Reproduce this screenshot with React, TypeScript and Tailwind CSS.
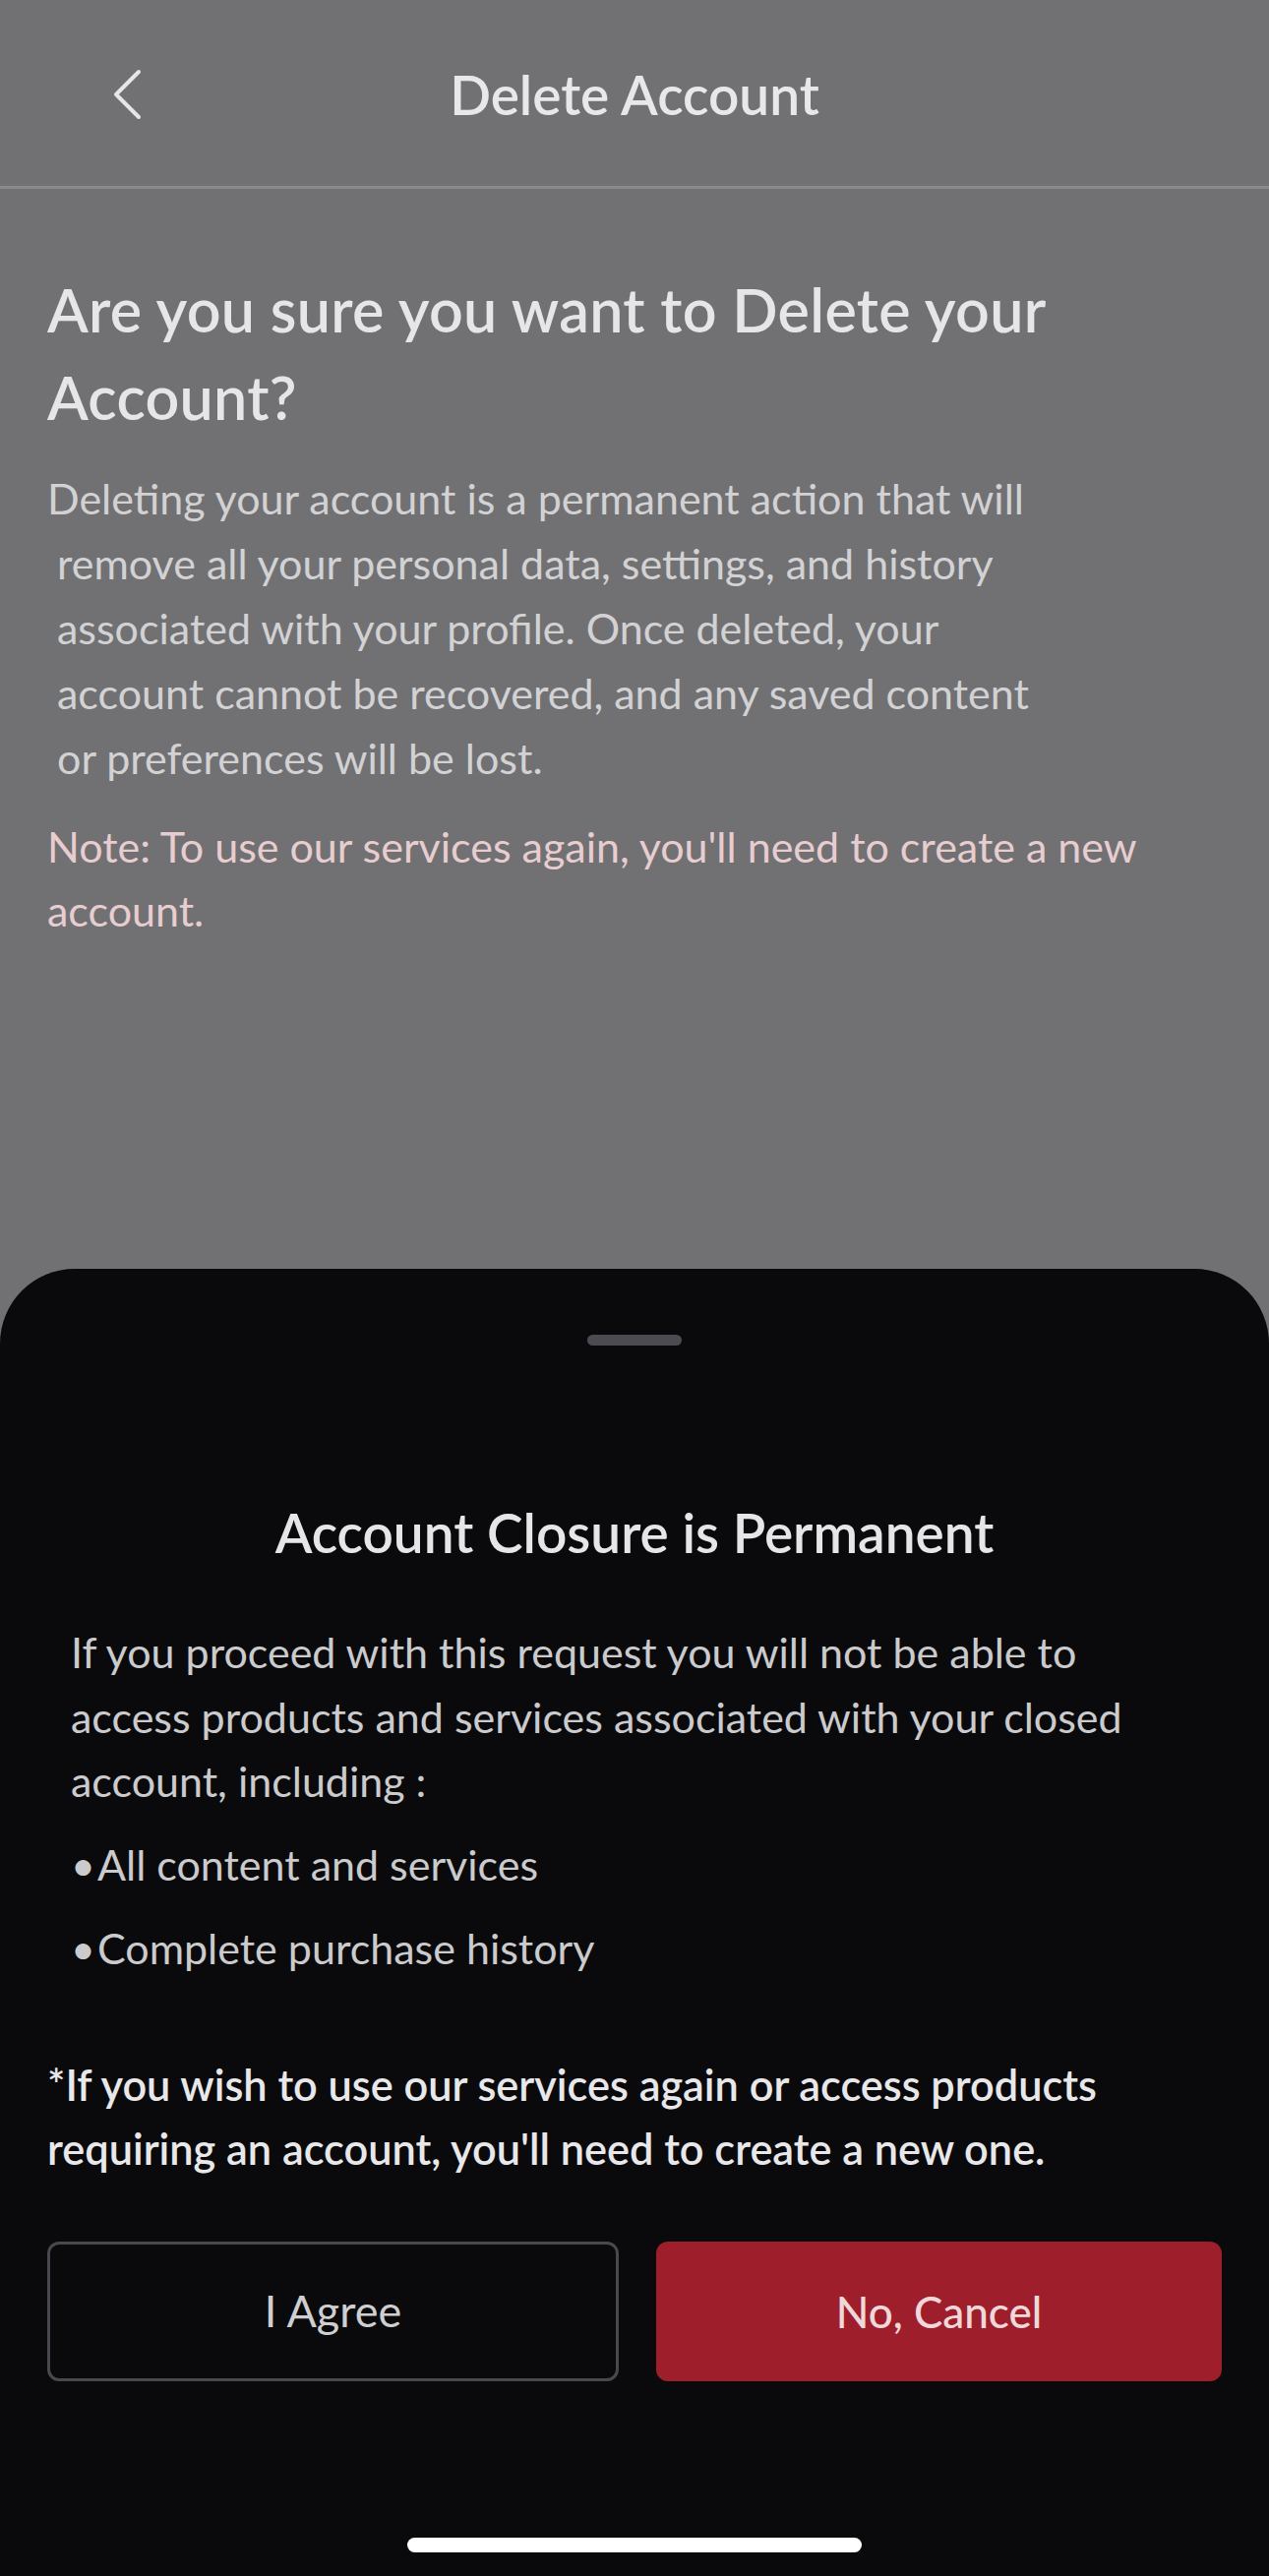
export default function App() {
  return (
    <div className="flex flex-col w-[1290px] h-[2619px] bg-[#717173] overflow-hidden font-['Lato',sans-serif]">
      {/* Header */}
      <div className="relative flex items-center justify-center h-[192px] border-b-[3px] border-[#8a8a8c] shrink-0">
        <div className="absolute left-[112px] top-[70px]">
          <svg width="36" height="52" viewBox="0 0 36 52" fill="none">
            <path d="M29 3 L6 26 L29 49" stroke="#e6e6e8" strokeWidth="4" strokeLinecap="round" strokeLinejoin="round" />
          </svg>
        </div>
        <div className="text-[55px] font-semibold text-[#e8e8ea] leading-none pt-[4px]">Delete Account</div>
      </div>

      {/* Content */}
      <div className="px-[48px] pt-[78px]">
        <h1 className="text-[61px] leading-[89px] font-semibold tracking-[0.3px] text-[#e6e6e8]">
          Are you sure you want to Delete your
          <br />
          Account?
        </h1>
        <div className="mt-[26px] text-[43px] leading-[66px] text-[#d2d2d4]">
          <div>Deleting your account is a permanent action that will</div>
          <div className="pl-[10px]">remove all your personal data, settings, and history</div>
          <div className="pl-[10px]">associated with your profile. Once deleted, your</div>
          <div className="pl-[10px]">account cannot be recovered, and any saved content</div>
          <div className="pl-[10px]">or preferences will be lost.</div>
        </div>
        <div className="mt-[24px] text-[43px] leading-[65px] text-[#e8cdd0]">
          Note: To use our services again, you'll need to create a new
          <br />
          account.
        </div>
      </div>

      {/* Bottom sheet */}
      <div className="mt-auto h-[1329px] shrink-0 bg-[#0a0a0c] rounded-t-[76px] flex flex-col">
        <div className="pt-[67px] flex justify-center">
          <div className="w-[96px] h-[11px] rounded-full bg-[#4b4b51]" />
        </div>
        <div className="mt-[157px] text-center text-[55px] leading-[66px] font-semibold text-[#e6e6e8]">
          Account Closure is Permanent
        </div>
        <div className="mt-[56px] px-[72px] text-[43px] leading-[65.5px] text-[#cbcbcd]">
          If you proceed with this request you will not be able to
          <br />
          access products and services associated with your closed
          <br />
          account, including :
        </div>
        <div className="mt-[19px] px-[72px] text-[43px] leading-[66px] text-[#cbcbcd] flex flex-col gap-[19px]">
          <div className="flex gap-[2px]">
            <span>•</span>
            <span>All content and services</span>
          </div>
          <div className="flex gap-[2px]">
            <span>•</span>
            <span>Complete purchase history</span>
          </div>
        </div>
        <div className="mt-[73px] px-[48px] text-[43.3px] leading-[65px] font-semibold text-[#e8e8ea]">
          *If you wish to use our services again or access products
          <br />
          requiring an account, you'll need to create a new one.
        </div>
        <div className="mt-[62px] px-[48px] flex gap-[38px]">
          <button className="flex-1 h-[142px] rounded-[12px] border-[3px] border-[#48484e] text-[45px] text-[#cfcfd1] bg-transparent">
            I Agree
          </button>
          <button className="flex-1 h-[142px] rounded-[12px] bg-[#9e1f2b] text-[44px] font-medium text-[#efd7da]">
            No, Cancel
          </button>
        </div>
        <div className="mt-auto mb-[24px] flex justify-center">
          <div className="w-[462px] h-[15px] rounded-full bg-white" />
        </div>
      </div>
    </div>
  );
}
